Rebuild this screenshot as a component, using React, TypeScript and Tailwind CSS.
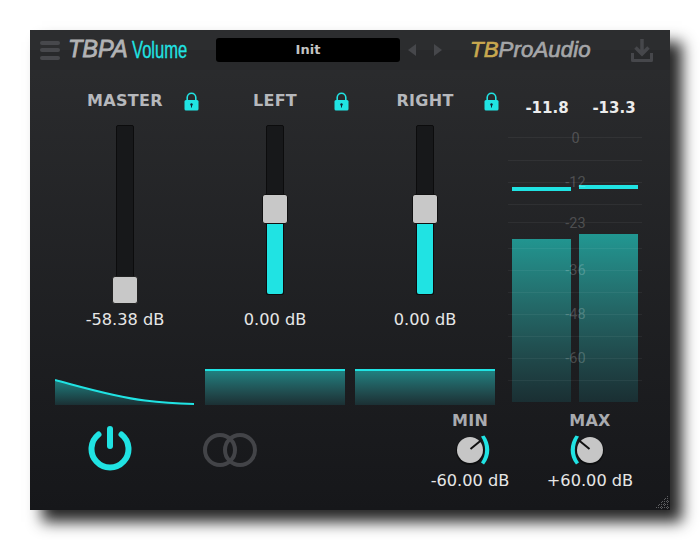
import React from 'react';

const sans = "font-['DejaVu_Sans',sans-serif]";

const LockIcon = () => (
  <svg width="15" height="19" viewBox="0 0 15 19">
    <path d="M3.2 9V5.6a4.3 4.3 0 0 1 8.6 0V9" fill="none" stroke="#20e3e3" strokeWidth="1.6" />
    <rect x="0.5" y="8" width="14" height="10.5" rx="1.5" fill="#20e3e3" />
    <circle cx="7.5" cy="12.5" r="1.2" fill="#123" />
    <rect x="7" y="12.5" width="1" height="3" fill="#123" />
  </svg>
);

const Fader = ({ label, value, filled }: { label: string; value: string; filled: boolean }) => (
  <div className="w-[150px] flex flex-col items-center">
    <div className="w-full h-5 grid grid-cols-[1fr_auto_1fr] items-center">
      <span />
      <span className={`${sans} text-[16px] leading-5 font-bold tracking-[0.3px] text-[#b6b8bc]`}>{label}</span>
      <span className="justify-self-end pr-px pt-[2px]"><LockIcon /></span>
    </div>
    <div className="relative mt-[15px] w-[18px] h-[170px] bg-[#17181a] border border-[#0c0c0d] rounded-[2px] flex flex-col justify-end">
      {filled && <div className="h-[71px] bg-[#20e3e3] rounded-b-[2px]" />}
      {filled ? (
        <div className="absolute left-[-5px] top-[68px] w-[26px] h-[30px] bg-[#c8c8c8] border border-[#111] rounded-[3px]" />
      ) : (
        <div className="absolute left-[-5px] top-[150px] w-[26px] h-[28px] bg-[#c8c8c8] border border-[#222] rounded-[3px]" />
      )}
    </div>
    <div className={`${sans} mt-[15px] h-5 leading-5 text-[16.2px] text-[#e6e6e6]`}>{value}</div>
  </div>
);

const Curve = () => (
  <svg width="140" height="36" viewBox="0 0 140 36">
    <defs>
      <linearGradient id="curveFill" x1="0" y1="0" x2="0" y2="1">
        <stop offset="0" stopColor="#1f7f7f" />
        <stop offset="1" stopColor="#1b3034" />
      </linearGradient>
    </defs>
    <path d="M0 11C30 19 60 28 90 31.5C110 33.8 125 34.5 139 35V36H0Z" fill="url(#curveFill)" />
    <path d="M0 11C30 19 60 28 90 31.5C110 33.8 125 34.5 139 35" fill="none" stroke="#20e3e3" strokeWidth="2" />
  </svg>
);

const FlatFill = () => (
  <div className="w-[140px] h-9 border-t-2 border-[#20e3e3] bg-gradient-to-b from-[#1f8080] to-[#1b3034]" />
);

const Knob = ({ label, value, mirror }: { label: string; value: string; mirror: boolean }) => (
  <div className="w-[120px] flex flex-col items-center pt-[5px]">
    <div className={`${sans} h-5 leading-5 pt-px text-[16px] font-bold tracking-[0.3px] text-[#a9abaf]`}>{label}</div>
    <svg width="44" height="36" viewBox="-22 -18 44 36" className={`mt-[2px] ${mirror ? '-scale-x-100' : ''}`}>
      <circle cx="0" cy="1" r="14" fill="#0e0f10" />
      <circle cx="0" cy="0" r="13" fill="#c6c6c6" />
      <line x1="0.5" y1="-1" x2="11.5" y2="-10" stroke="#111" strokeWidth="2" />
      <path d="M11 -13.5L14.5 -14.5C20.5 -6 21.5 5 14 14.5L11 12.5C16.5 5 16.5 -5 11 -13.5Z" fill="#20e3e3" />
    </svg>
    <div className={`${sans} mt-[3px] h-5 leading-5 text-[16.2px] text-[#e6e6e6]`}>{value}</div>
  </div>
);

const gridLines = [
  'top-[7px]', 'top-[30px]', 'top-[52px]', 'top-[74px]', 'top-[92px]', 'top-[118px]',
  'top-[140px]', 'top-[162px]', 'top-[184px]', 'top-[206px]', 'top-[228px]', 'top-[250px]',
];

const scale = [
  { text: '0', pos: 'top-[-1px]' },
  { text: '-12', pos: 'top-[43px]' },
  { text: '-23', pos: 'top-[84px]' },
  { text: '-36', pos: 'top-[131px]' },
  { text: '-48', pos: 'top-[175px]' },
  { text: '-60', pos: 'top-[219px]' },
];

const Meter = () => (
  <div className="w-[134px] flex flex-col">
    <div className={`${sans} mt-[28px] h-5 leading-5 flex text-[15px] font-bold text-[#ececec]`}>
      <span className="ml-[17px] w-[44px] text-center">-11.8</span>
      <span className="ml-[23px] w-[44px] text-center">-13.3</span>
    </div>
    <div className="relative mt-3 h-[272px] flex gap-2 px-1">
      <div className="w-[59px] flex flex-col">
        <div className="mt-[57px] h-1 bg-[#20e3e3]" />
        <div className="mt-auto h-[163px] bg-gradient-to-b from-[#219590] to-[#1a2f33]" />
      </div>
      <div className="w-[59px] flex flex-col">
        <div className="mt-[55px] h-1 bg-[#20e3e3]" />
        <div className="mt-auto h-[168px] bg-gradient-to-b from-[#219792] to-[#1a2f33]" />
      </div>
      {gridLines.map((pos) => (
        <div key={pos} className={`absolute left-0 right-0 h-px bg-white/5 ${pos}`} />
      ))}
      {scale.map((s) => (
        <div
          key={s.text}
          className={`absolute left-0 right-0 pl-[1px] h-5 leading-5 text-center font-['Roboto',sans-serif] text-[14.5px] text-white/20 ${s.pos}`}
        >
          {s.text}
        </div>
      ))}
    </div>
  </div>
);

export default function App() {
  return (
    <div className="w-[700px] h-[540px] bg-white pt-[30px] pl-[30px] overflow-hidden">
      <div className="relative w-[640px] h-[480px] flex flex-col bg-gradient-to-b from-[#2c2d2f] to-[#16171a] shadow-[12px_12px_14px_rgba(0,0,0,0.85)]">
        {/* Header */}
        <div className="h-10 flex items-center bg-gradient-to-b from-[#2c2d2f] from-50% to-[#28292b] to-50%">
          <div className="ml-[10px] w-5 flex flex-col gap-[3.5px]">
            <div className="h-1 rounded-full bg-[#47484c]" />
            <div className="h-1 rounded-full bg-[#47484c]" />
            <div className="h-1 rounded-full bg-[#47484c]" />
          </div>
          <span className="ml-2 w-[60px] font-['Liberation_Sans',sans-serif] italic text-[23.5px] text-[#b2b3b5] [-webkit-text-stroke:0.8px_#b2b3b5]">TBPA</span>
          <span className="ml-1 w-[55px] origin-left scale-x-[0.69] font-['Liberation_Sans',sans-serif] text-[24px] text-[#20e3e3] whitespace-nowrap [-webkit-text-stroke:0.3px_#20e3e3]">Volume</span>
          <div className={`${sans} ml-[29px] w-[184px] h-6 leading-6 rounded-[3px] bg-black text-center text-[13px] font-bold text-[#c4c4c4]`}>Init</div>
          <svg width="34" height="12" viewBox="0 0 34 12" className="ml-2">
            <path d="M8 0V12L0 6Z" fill="#46474b" />
            <path d="M26 0V12L34 6Z" fill="#46474b" />
          </svg>
          <span className="ml-[28px] w-[121px] font-['Liberation_Sans',sans-serif] italic text-[22.2px] tracking-[0.1px] whitespace-nowrap text-[#a5a6a8] [-webkit-text-stroke:0.7px_#a5a6a8]">
            <span className="text-[#c8a84f] [-webkit-text-stroke:0.7px_#c8a84f]">TB</span>ProAudio
          </span>
          <svg width="22" height="23" viewBox="0 0 22 23" className="ml-10">
            <path d="M11 0V14M4.5 8.5L11 15L17.5 8.5" fill="none" stroke="#46474b" strokeWidth="3.5" />
            <path d="M1.5 14V21.5H20.5V14" fill="none" stroke="#46474b" strokeWidth="3" strokeLinejoin="round" />
          </svg>
        </div>

        {/* Faders and meter */}
        <div className="h-[335px] flex">
          <div className="w-[478px] flex flex-col pl-5 pt-5">
            <div className="flex">
              <Fader label="MASTER" value="-58.38 dB" filled={false} />
              <Fader label="LEFT" value="0.00 dB" filled />
              <Fader label="RIGHT" value="0.00 dB" filled />
            </div>
            <div className="mt-[39px] pl-[5px] flex gap-[10px]">
              <Curve />
              <FlatFill />
              <FlatFill />
            </div>
          </div>
          <Meter />
        </div>

        {/* Bottom controls */}
        <div className="flex-1 flex items-start">
          <svg width="44" height="47" viewBox="0 0 44 47" className="ml-[58px] mt-[20px]">
            <path d="M10.5 9.5A18.5 18.5 0 1 0 33.5 9.5" fill="none" stroke="#20e3e3" strokeWidth="6" strokeLinecap="round" />
            <line x1="22" y1="4" x2="22" y2="21" stroke="#20e3e3" strokeWidth="6" strokeLinecap="round" />
          </svg>
          <svg width="54" height="34" viewBox="0 0 54 34" className="ml-[71px] mt-[28px]">
            <circle cx="17" cy="17" r="15" fill="none" stroke="#434448" strokeWidth="4" />
            <circle cx="37" cy="17" r="15" fill="none" stroke="#434448" strokeWidth="4" />
          </svg>
          <div className="ml-[153px] flex">
            <Knob label="MIN" value="-60.00 dB" mirror={false} />
            <Knob label="MAX" value="+60.00 dB" mirror />
          </div>
        </div>

        {/* Resize grip */}
        <svg width="13" height="13" viewBox="0 0 13 13" className="absolute right-px bottom-px">
          <path d="M11.5 0V13M8.5 3V13M5.5 6V13M2.5 9V13M0 11.5H13M3 8.5H13M6 5.5H13M9 2.5H13" stroke="#5c5d60" strokeWidth="1" strokeDasharray="1 1" />
        </svg>
      </div>
    </div>
  );
}
